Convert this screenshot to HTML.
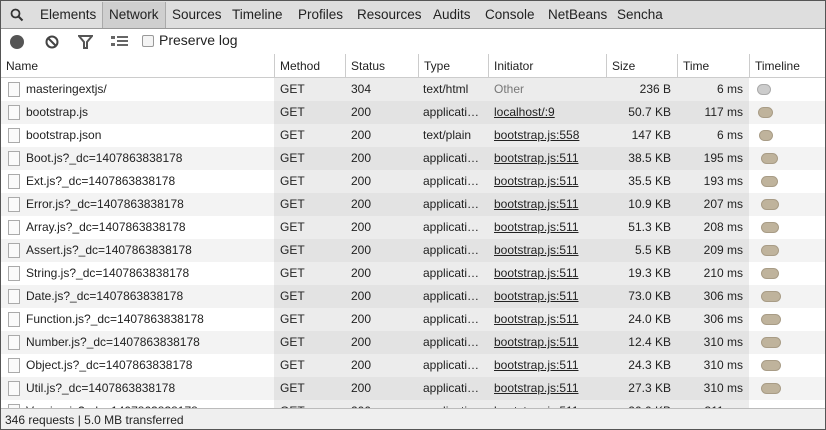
<!DOCTYPE html>
<html><head><style>
*{margin:0;padding:0;box-sizing:border-box}
body{width:826px;height:430px;overflow:hidden;font-family:"Liberation Sans",sans-serif;font-size:12px;color:#222;background:#fff;position:relative}
.frame{position:absolute;inset:0;border:1px solid #555;pointer-events:none;z-index:10}
.tabs{position:absolute;left:0;top:0;width:826px;height:29px;background:#dedede;border-bottom:1px solid #999}
.tabs span{position:absolute;top:7px;font-size:13.5px;color:#222}
.tool{position:absolute;top:29px;left:0;width:826px;height:24px;background:#fff}
.hdr{position:absolute;top:54px;left:0;width:826px;height:24px;border-bottom:1px solid #ccc;background:#fff}
.hdr span{position:absolute;top:5px}
.vl{position:absolute;top:54px;width:1px;height:354px;background:#ccc}
.row{position:absolute;left:0;width:826px;height:23px}
.row div{position:absolute;top:0;height:23px;line-height:23px;white-space:nowrap;overflow:hidden}
.c0{left:0;width:274px;padding-left:26px}
.c1{left:274px;width:71px;padding-left:6px}
.c2{left:345px;width:73px;padding-left:6px}
.c3{left:418px;width:70px;padding-left:5px}
.c4{left:488px;width:118px;padding-left:6px}
.c5{left:606px;width:71px;text-align:right;padding-right:6px}
.c6{left:677px;width:72px;text-align:right;padding-right:6px}
.c7{left:749px;width:77px}
.odd .c0,.odd .c7{background:#fff}
.even .c0,.even .c7{background:#f3f3f3}
.odd .mid{background:#ececec}
.even .mid{background:#e3e3e3}
.u{text-decoration:underline}
.ic{position:absolute;left:8px;top:4px;width:12px;height:15px;border:1px solid #aaa;background:#fafafa}
.pill{position:absolute;top:6px;height:11px;border-radius:6px;background:#bfb39c;border:1px solid #a89c86}
.foot{position:absolute;left:0;top:408px;width:826px;height:22px;background:#efefef;border-top:1px solid #bbb;padding:4px 0 0 5px}
</style></head><body>
<div class="tabs">
<svg style="position:absolute;left:10px;top:8px" width="14" height="14"><circle cx="5.5" cy="5.5" r="4" fill="none" stroke="#333" stroke-width="1.8"/><line x1="8.5" y1="8.5" x2="12.5" y2="12.5" stroke="#333" stroke-width="2"/></svg>
<span style="left:40px">Elements</span>
<div style="position:absolute;left:102px;top:2px;width:64px;height:26px;background:#cfcfcf;border-left:1px solid #aaa;border-right:1px solid #aaa"></div>
<span style="left:109px">Network</span>
<span style="left:172px">Sources</span><span style="left:232px">Timeline</span><span style="left:298px">Profiles</span><span style="left:357px">Resources</span><span style="left:433px">Audits</span><span style="left:485px">Console</span><span style="left:548px">NetBeans</span><span style="left:617px">Sencha</span>
</div>
<div class="tool">
<div style="position:absolute;left:10px;top:6px;width:14px;height:14px;border-radius:50%;background:#555"></div>
<svg style="position:absolute;left:45px;top:6px" width="14" height="14"><circle cx="7" cy="7" r="5.5" fill="none" stroke="#444" stroke-width="2"/><line x1="3" y1="3" x2="11" y2="11" stroke="#444" stroke-width="2"/></svg>
<svg style="position:absolute;left:78px;top:6px" width="15" height="14"><path d="M1 1H14L9 7V13H6V7Z" fill="none" stroke="#555" stroke-width="2"/></svg>
<svg style="position:absolute;left:111px;top:6px" width="18" height="13"><rect x="0" y="1" width="4" height="3" fill="#666"/><rect x="0" y="8" width="4" height="3" fill="#666"/><rect x="6" y="1" width="11" height="2" fill="#666"/><rect x="6" y="5" width="11" height="2" fill="#666"/><rect x="6" y="9" width="11" height="2" fill="#666"/></svg>
<div style="position:absolute;left:142px;top:6px;width:12px;height:12px;border:1px solid #999;border-radius:2px;background:#f4f4f4"></div>
<span style="position:absolute;left:159px;top:3px;font-size:14px">Preserve log</span>
</div>
<div class="hdr">
<span style="left:6px">Name</span><span style="left:280px">Method</span><span style="left:351px">Status</span><span style="left:424px">Type</span><span style="left:494px">Initiator</span><span style="left:612px">Size</span><span style="left:683px">Time</span><span style="left:755px">Timeline</span>
</div>
<div class="vl" style="left:274px"></div><div class="vl" style="left:345px"></div><div class="vl" style="left:418px"></div><div class="vl" style="left:488px"></div><div class="vl" style="left:606px"></div><div class="vl" style="left:677px"></div><div class="vl" style="left:749px"></div>
<div class="row odd" style="top:78px"><div class="c0"><span class="ic"></span>masteringextjs/</div><div class="c1 mid">GET</div><div class="c2 mid">304</div><div class="c3 mid">text/html</div><div class="c4 mid" style="color:#777">Other</div><div class="c5 mid">236 B</div><div class="c6 mid">6 ms</div><div class="c7"><span class="pill" style="left:8px;width:14px;background:#ccc;border-color:#aaa"></span></div></div>
<div class="row even" style="top:101px"><div class="c0"><span class="ic"></span>bootstrap.js</div><div class="c1 mid">GET</div><div class="c2 mid">200</div><div class="c3 mid">applicati…</div><div class="c4 mid u">localhost/:9</div><div class="c5 mid">50.7 KB</div><div class="c6 mid">117 ms</div><div class="c7"><span class="pill" style="left:9px;width:15px"></span></div></div>
<div class="row odd" style="top:124px"><div class="c0"><span class="ic"></span>bootstrap.json</div><div class="c1 mid">GET</div><div class="c2 mid">200</div><div class="c3 mid">text/plain</div><div class="c4 mid u">bootstrap.js:558</div><div class="c5 mid">147 KB</div><div class="c6 mid">6 ms</div><div class="c7"><span class="pill" style="left:10px;width:14px"></span></div></div>
<div class="row even" style="top:147px"><div class="c0"><span class="ic"></span>Boot.js?_dc=1407863838178</div><div class="c1 mid">GET</div><div class="c2 mid">200</div><div class="c3 mid">applicati…</div><div class="c4 mid u">bootstrap.js:511</div><div class="c5 mid">38.5 KB</div><div class="c6 mid">195 ms</div><div class="c7"><span class="pill" style="left:12px;width:17px"></span></div></div>
<div class="row odd" style="top:170px"><div class="c0"><span class="ic"></span>Ext.js?_dc=1407863838178</div><div class="c1 mid">GET</div><div class="c2 mid">200</div><div class="c3 mid">applicati…</div><div class="c4 mid u">bootstrap.js:511</div><div class="c5 mid">35.5 KB</div><div class="c6 mid">193 ms</div><div class="c7"><span class="pill" style="left:12px;width:17px"></span></div></div>
<div class="row even" style="top:193px"><div class="c0"><span class="ic"></span>Error.js?_dc=1407863838178</div><div class="c1 mid">GET</div><div class="c2 mid">200</div><div class="c3 mid">applicati…</div><div class="c4 mid u">bootstrap.js:511</div><div class="c5 mid">10.9 KB</div><div class="c6 mid">207 ms</div><div class="c7"><span class="pill" style="left:12px;width:18px"></span></div></div>
<div class="row odd" style="top:216px"><div class="c0"><span class="ic"></span>Array.js?_dc=1407863838178</div><div class="c1 mid">GET</div><div class="c2 mid">200</div><div class="c3 mid">applicati…</div><div class="c4 mid u">bootstrap.js:511</div><div class="c5 mid">51.3 KB</div><div class="c6 mid">208 ms</div><div class="c7"><span class="pill" style="left:12px;width:18px"></span></div></div>
<div class="row even" style="top:239px"><div class="c0"><span class="ic"></span>Assert.js?_dc=1407863838178</div><div class="c1 mid">GET</div><div class="c2 mid">200</div><div class="c3 mid">applicati…</div><div class="c4 mid u">bootstrap.js:511</div><div class="c5 mid">5.5 KB</div><div class="c6 mid">209 ms</div><div class="c7"><span class="pill" style="left:12px;width:18px"></span></div></div>
<div class="row odd" style="top:262px"><div class="c0"><span class="ic"></span>String.js?_dc=1407863838178</div><div class="c1 mid">GET</div><div class="c2 mid">200</div><div class="c3 mid">applicati…</div><div class="c4 mid u">bootstrap.js:511</div><div class="c5 mid">19.3 KB</div><div class="c6 mid">210 ms</div><div class="c7"><span class="pill" style="left:12px;width:18px"></span></div></div>
<div class="row even" style="top:285px"><div class="c0"><span class="ic"></span>Date.js?_dc=1407863838178</div><div class="c1 mid">GET</div><div class="c2 mid">200</div><div class="c3 mid">applicati…</div><div class="c4 mid u">bootstrap.js:511</div><div class="c5 mid">73.0 KB</div><div class="c6 mid">306 ms</div><div class="c7"><span class="pill" style="left:12px;width:20px"></span></div></div>
<div class="row odd" style="top:308px"><div class="c0"><span class="ic"></span>Function.js?_dc=1407863838178</div><div class="c1 mid">GET</div><div class="c2 mid">200</div><div class="c3 mid">applicati…</div><div class="c4 mid u">bootstrap.js:511</div><div class="c5 mid">24.0 KB</div><div class="c6 mid">306 ms</div><div class="c7"><span class="pill" style="left:12px;width:20px"></span></div></div>
<div class="row even" style="top:331px"><div class="c0"><span class="ic"></span>Number.js?_dc=1407863838178</div><div class="c1 mid">GET</div><div class="c2 mid">200</div><div class="c3 mid">applicati…</div><div class="c4 mid u">bootstrap.js:511</div><div class="c5 mid">12.4 KB</div><div class="c6 mid">310 ms</div><div class="c7"><span class="pill" style="left:12px;width:20px"></span></div></div>
<div class="row odd" style="top:354px"><div class="c0"><span class="ic"></span>Object.js?_dc=1407863838178</div><div class="c1 mid">GET</div><div class="c2 mid">200</div><div class="c3 mid">applicati…</div><div class="c4 mid u">bootstrap.js:511</div><div class="c5 mid">24.3 KB</div><div class="c6 mid">310 ms</div><div class="c7"><span class="pill" style="left:12px;width:20px"></span></div></div>
<div class="row even" style="top:377px"><div class="c0"><span class="ic"></span>Util.js?_dc=1407863838178</div><div class="c1 mid">GET</div><div class="c2 mid">200</div><div class="c3 mid">applicati…</div><div class="c4 mid u">bootstrap.js:511</div><div class="c5 mid">27.3 KB</div><div class="c6 mid">310 ms</div><div class="c7"><span class="pill" style="left:12px;width:20px"></span></div></div>
<div class="row odd" style="top:400px;height:8px;overflow:hidden"><div class="c0"><span class="ic"></span>Version.js?_dc=1407863838178</div><div class="c1 mid">GET</div><div class="c2 mid">200</div><div class="c3 mid">applicati…</div><div class="c4 mid u">bootstrap.js:511</div><div class="c5 mid">20.0 KB</div><div class="c6 mid">311 ms</div><div class="c7"></div></div>
<div class="foot">346 requests | 5.0 MB transferred</div>
<div class="frame"></div>
</body></html>
